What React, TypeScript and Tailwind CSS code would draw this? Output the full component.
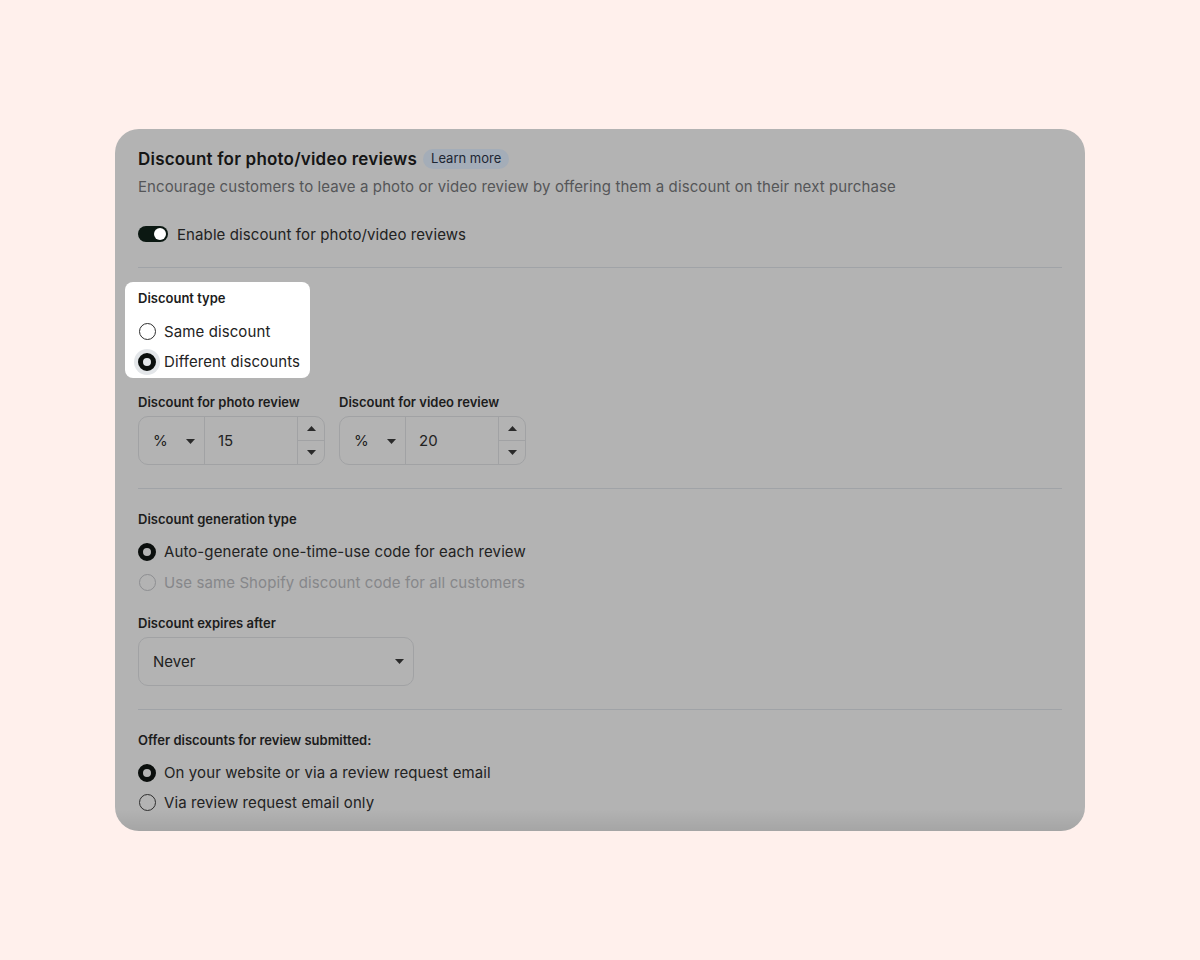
import React from "react";

const font = { fontFamily: "Inter, 'Noto Sans', sans-serif" };

function Radio({ checked, halo, disabled }: { checked?: boolean; halo?: boolean; disabled?: boolean }) {
  return (
    <span className="relative flex h-[18px] w-[18px] shrink-0 items-center justify-center">
      {halo && <span className="absolute -inset-[4px] rounded-full bg-[#e3e6e9]" />}
      {checked ? (
        <span className="relative h-[18px] w-[18px] rounded-full border-[5px] border-[#0b0f0d]" />
      ) : (
        <span
          className={
            "relative h-[17px] w-[17px] rounded-full border-[1.5px] " +
            (disabled ? "border-[#8d8e91]" : "border-[#2e2e2e]")
          }
        />
      )}
    </span>
  );
}

function RadioRow({
  label,
  checked,
  halo,
  disabled,
}: {
  label: string;
  checked?: boolean;
  halo?: boolean;
  disabled?: boolean;
}) {
  return (
    <div className="flex h-[24px] items-center gap-[8px] pt-px">
      <Radio checked={checked} halo={halo} disabled={disabled} />
      <span
        className={
          "text-[15px] leading-5 tracking-[0.1px] " + (disabled ? "text-[#86878a]" : "text-[#222]")
        }
      >
        {label}
      </span>
    </div>
  );
}

function Caret({ up }: { up?: boolean }) {
  return (
    <svg width="9" height="5" viewBox="0 0 9 5" className="shrink-0">
      {up ? <path d="M0 5 L4.5 0 L9 5 Z" fill="#2a2a2a" /> : <path d="M0 0 L4.5 5 L9 0 Z" fill="#2a2a2a" />}
    </svg>
  );
}

function NumberGroup({ value }: { value: string }) {
  return (
    <div className="flex h-[49px] w-[187px] overflow-hidden rounded-[10px] border border-[#a1a2a4]">
      <div className="flex w-[66px] items-center justify-between border-r border-[#a1a2a4] pl-[14px] pr-[9px] pt-px">
        <span className="text-[15px] text-[#222]">%</span>
        <Caret />
      </div>
      <div className="flex flex-1 items-center pl-[13px] pt-px text-[15px] text-[#222]">{value}</div>
      <div className="flex w-[27px] flex-col border-l border-[#a1a2a4]">
        <div className="flex flex-1 items-center justify-center border-b border-[#a1a2a4]">
          <Caret up />
        </div>
        <div className="flex flex-1 items-center justify-center">
          <Caret />
        </div>
      </div>
    </div>
  );
}

function Label({ children }: { children: React.ReactNode }) {
  return <div className="text-[13px] font-semibold leading-4 text-[#1c1c1c]">{children}</div>;
}

export default function App() {
  return (
    <div className="h-[960px] w-full bg-[#fff0ec] pt-[129px]" style={font}>
      <div className="relative mx-auto h-[702px] w-[970px] overflow-hidden rounded-[24px] bg-[#b3b3b3] px-[23px]">
        <div className="pt-[18px]">
          <div className="flex h-[24px] items-center gap-[6px]">
            <h2 className="text-[17px] font-semibold leading-6 tracking-[0.2px] text-[#151515]">
              Discount for photo/video reviews
            </h2>
            <span className="flex h-[20px] items-center rounded-full bg-[#a4adb8] px-[8px] text-[13px] text-[#1d2633]">
              Learn more
            </span>
          </div>
          <p className="mt-[6px] text-[15px] leading-5 tracking-[0.1px] text-[#555658]">
            Encourage customers to leave a photo or video review by offering them a discount on their next purchase
          </p>

          <div className="mt-[27px] flex h-[20px] items-center gap-[9px]">
            <span className="flex h-[16px] w-[30px] items-center justify-end rounded-full bg-[#0b1812] px-[2px]">
              <span className="h-[12px] w-[12px] rounded-full bg-white" />
            </span>
            <span className="pt-px text-[15px] leading-5 tracking-[0.1px] text-[#222]">
              Enable discount for photo/video reviews
            </span>
          </div>

          <div className="mt-[23px] h-px bg-[#a0a3a7]" />

          <div className="-ml-[13px] mt-[14px] w-fit rounded-[8px] bg-white pb-[5px] pl-[13px] pr-[10px] pt-[8px]">
            <Label>Discount type</Label>
            <div className="mt-[13px] flex flex-col gap-[6px]">
              <RadioRow label="Same discount" />
              <RadioRow label="Different discounts" checked halo />
            </div>
          </div>

          <div className="mt-[16px] flex gap-[14px]">
            <div>
              <Label>Discount for photo review</Label>
              <div className="mt-[6px]">
                <NumberGroup value="15" />
              </div>
            </div>
            <div>
              <Label>Discount for video review</Label>
              <div className="mt-[6px]">
                <NumberGroup value="20" />
              </div>
            </div>
          </div>

          <div className="mt-[23px] h-px bg-[#a0a3a7]" />

          <div className="mt-[22px]">
            <Label>Discount generation type</Label>
          </div>
          <div className="mt-[12px] flex flex-col gap-[7px]">
            <RadioRow label="Auto-generate one-time-use code for each review" checked />
            <RadioRow label="Use same Shopify discount code for all customers" disabled />
          </div>

          <div className="mt-[21px]">
            <Label>Discount expires after</Label>
          </div>
          <div className="mt-[6px] flex h-[49px] w-[276px] items-center justify-between rounded-[10px] border border-[#a1a2a4] pl-[14px] pr-[9px]">
            <span className="pt-px text-[15px] text-[#222]">Never</span>
            <Caret />
          </div>

          <div className="mt-[23px] h-px bg-[#a0a3a7]" />

          <div className="mt-[22px]">
            <Label>Offer discounts for review submitted:</Label>
          </div>
          <div className="mt-[12px] flex flex-col gap-[6px]">
            <RadioRow label="On your website or via a review request email" checked />
            <RadioRow label="Via review request email only" />
          </div>
        </div>
        <div className="pointer-events-none absolute inset-x-0 bottom-0 h-[22px] bg-gradient-to-b from-transparent to-black/[0.08]" />
      </div>
    </div>
  );
}
